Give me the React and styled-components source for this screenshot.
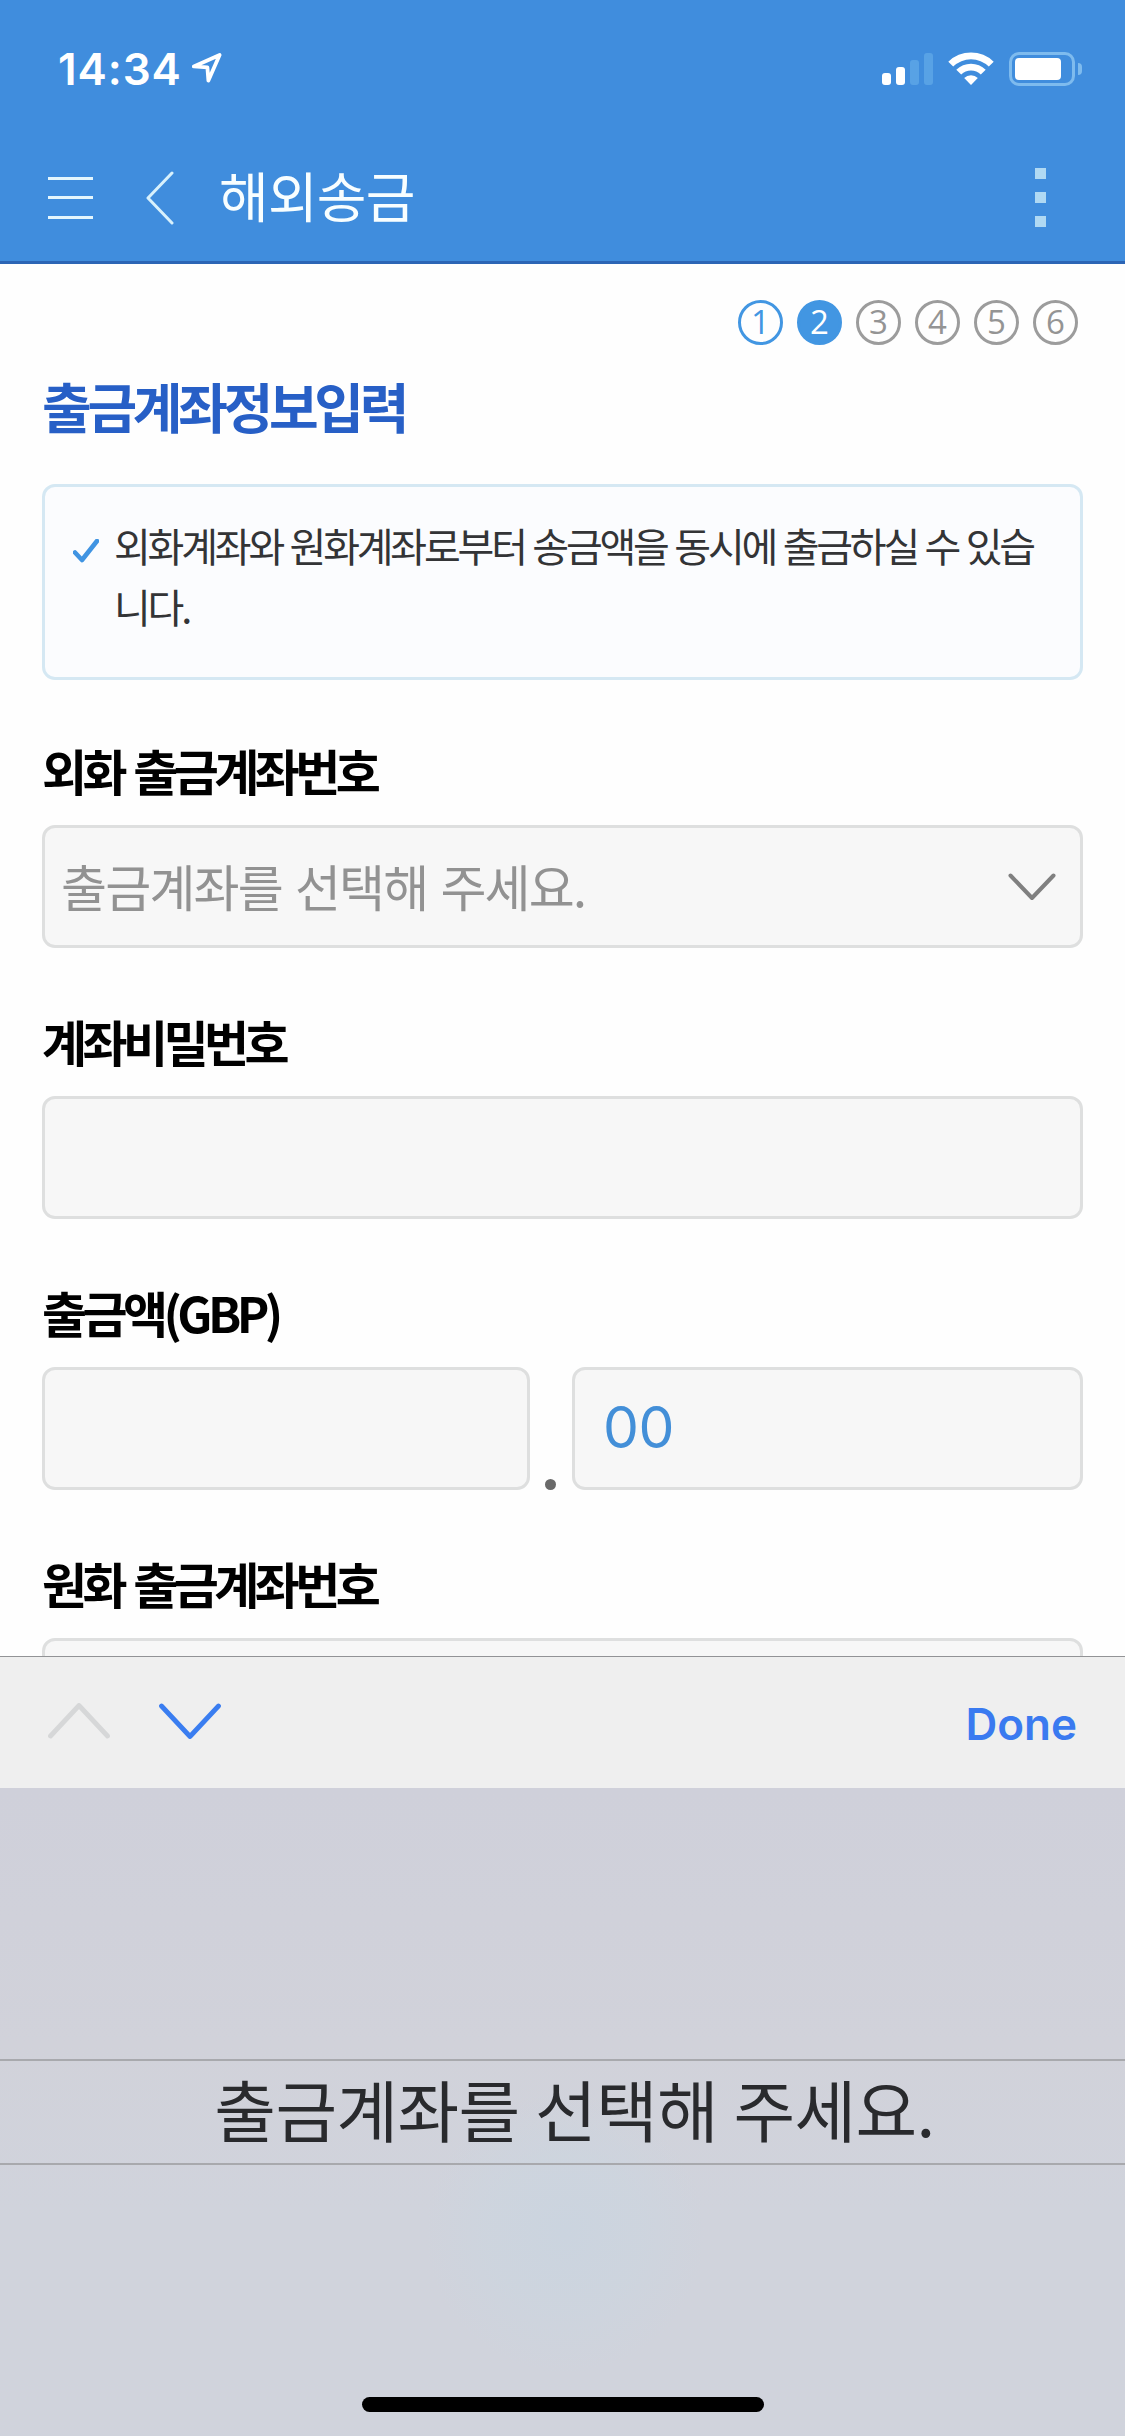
import { useState } from "react";
import styled, { createGlobalStyle } from "styled-components";

const steps = [1, 2, 3, 4, 5, 6];

const App = () => {
  const [current] = useState(2);

  return (
    <>
      <GlobalStyle />
      <Screen>
        <StatusBar>
          <Clock>14:34</Clock>
          <LocationIcon viewBox="0 0 30 30">
            <path d="M1.8 13.4 L27.6 2 L16.4 27.6 L15.4 14.4 Z" />
          </LocationIcon>
          <Signal>
            <Bar $h={12} />
            <Bar $h={18} />
            <Bar $h={25} $off />
            <Bar $h={32} $off />
          </Signal>
          <WifiIcon viewBox="0 0 46 33">
            <path d="M0.3 9.8 A32.2 32.2 0 0 1 45.7 9.8 L40.8 14.6 A25.4 25.4 0 0 0 5.2 14.6 Z" />
            <path d="M8.3 17.8 A21 21 0 0 1 37.7 17.8 L32.8 22.6 A14 14 0 0 0 13.2 22.6 Z" />
            <path d="M16.2 26 A9.7 9.7 0 0 1 29.8 26 L23 33 Z" />
          </WifiIcon>
          <Battery>
            <BatteryLevel />
          </Battery>
          <BatteryCap />
        </StatusBar>

        <Header>
          <MenuIcon>
            <i />
            <i />
            <i />
          </MenuIcon>
          <BackIcon viewBox="0 0 28 54">
            <path d="M26 2 L2 27 L26 52" />
          </BackIcon>
          <Title>해외송금</Title>
          <MoreIcon>
            <i />
            <i />
            <i />
          </MoreIcon>
        </Header>

        <Content>
          <Steps>
            {steps.map((n) => (
              <Step key={n} $done={n < current} $active={n === current}>
                {n}
              </Step>
            ))}
          </Steps>
          <Heading>출금계좌정보입력</Heading>
          <Notice>
            <CheckIcon viewBox="0 0 26 24">
              <path d="M2 13.5 L9 21 L24 2" />
            </CheckIcon>
            <p>
              외화계좌와 원화계좌로부터 송금액을 동시에 출금하실 수 있습
              <br />
              니다.
            </p>
          </Notice>

          <Field>
            <Label>외화 출금계좌번호</Label>
            <Select>
              <Placeholder>출금계좌를 선택해 주세요.</Placeholder>
              <SelectArrow viewBox="0 0 48 28">
                <path d="M2.5 2.5 L24 25 L45.5 2.5" />
              </SelectArrow>
            </Select>
          </Field>
          <Field>
            <Label>계좌비밀번호</Label>
            <Box />
          </Field>
          <Field>
            <Label>출금액(GBP)</Label>
            <AmountRow>
              <Box $w={488} />
              <Point />
              <Box $w={511}>
                <Cents>00</Cents>
              </Box>
            </AmountRow>
          </Field>
          <Field>
            <Label>원화 출금계좌번호</Label>
            <Box />
          </Field>
        </Content>

        <Toolbar>
          <NavArrow viewBox="0 0 62 36" $disabled>
            <path d="M2.5 33 L31 2.5 L59.5 33" />
          </NavArrow>
          <NavArrow viewBox="0 0 62 36">
            <path d="M2.5 3 L31 33.5 L59.5 3" />
          </NavArrow>
          <Done>Done</Done>
        </Toolbar>
        <Picker>
          <PickerRow>
            <span>출금계좌를 선택해 주세요.</span>
          </PickerRow>
          <HomeBar />
        </Picker>
      </Screen>
    </>
  );
};

export default App;

const GlobalStyle = createGlobalStyle`
  * {
    box-sizing: border-box;
  }
  body {
    margin: 0;
    background: #fff;
    font-family: "Noto Sans CJK KR", sans-serif;
  }
  p, h1, h2 {
    margin: 0;
  }
  svg {
    display: block;
    flex: none;
    fill: none;
    stroke-linecap: round;
    stroke-linejoin: round;
  }
`;

const Screen = styled.div`
  display: flex;
  flex-direction: column;
  width: 1125px;
  height: 2436px;
  overflow: hidden;
  background: #fefefe;
`;

const StatusBar = styled.div`
  display: flex;
  align-items: flex-start;
  flex: none;
  height: 132px;
  padding: 52px 43px 0 58px;
  background: #408ddd;
`;
const Clock = styled.div`
  width: 134px;
  height: 34px;
  font-family: Inter, sans-serif;
  font-size: 44px;
  font-weight: 600;
  line-height: 35px;
  letter-spacing: 0.9px;
  color: #fff;
`;
const LocationIcon = styled.svg`
  width: 30px;
  height: 30px;
  margin-top: 1px;
  stroke: #fff;
  stroke-width: 3.8;
`;
const Signal = styled.div`
  display: flex;
  align-items: flex-end;
  gap: 5px;
  height: 33px;
  margin-left: auto;
`;
const Bar = styled.i`
  width: 9px;
  height: ${(props) => props.$h}px;
  border-radius: 3px;
  background: ${(props) => (props.$off ? "#58a2e5" : "#fff")};
`;
const WifiIcon = styled.svg`
  width: 46px;
  height: 33px;
  margin-left: 15px;
  path {
    fill: #fff;
  }
`;
const Battery = styled.div`
  width: 66px;
  height: 34px;
  margin-left: 15px;
  padding: 3px;
  border: 3px solid #7ebbee;
  border-radius: 10px;
`;
const BatteryLevel = styled.div`
  width: 46px;
  height: 22px;
  border-radius: 4px;
  background: #fff;
`;
const BatteryCap = styled.div`
  width: 4px;
  height: 12px;
  margin: 11px 0 0 3px;
  border-radius: 0 4px 4px 0;
  background: #7ebbee;
`;

const Header = styled.header`
  display: flex;
  align-items: center;
  flex: none;
  height: 132px;
  padding: 2px 79px 0 48px;
  border-bottom: 3px solid #2c65b5;
  background: #408ddd;
`;
const MenuIcon = styled.div`
  display: flex;
  flex-direction: column;
  justify-content: space-between;
  width: 45px;
  height: 42px;
  i {
    height: 3px;
    background: #e4f6fd;
  }
`;
const BackIcon = styled.svg`
  width: 28px;
  height: 54px;
  margin-left: 53px;
  stroke: #d8f1fc;
  stroke-width: 3;
`;
const Title = styled.h1`
  margin-left: 45px;
  padding-bottom: 6px;
  font-size: 54px;
  font-weight: 400;
  line-height: 80px;
  letter-spacing: -0.8px;
  color: #f8feff;
`;
const MoreIcon = styled.div`
  display: flex;
  flex-direction: column;
  gap: 13px;
  margin-left: auto;
  i {
    width: 11px;
    height: 11px;
    background: #b0d9f3;
  }
`;

const Content = styled.main`
  flex: 1;
  min-height: 0;
  overflow: hidden;
  padding: 36px 42px 0;
`;
const Steps = styled.div`
  display: flex;
  justify-content: flex-end;
  gap: 14px;
  padding-right: 5px;
`;
const Step = styled.div`
  width: 45px;
  height: 45px;
  border: 3px solid
    ${(props) => (props.$done || props.$active ? "#4296e2" : "#9c9c9c")};
  border-radius: 50%;
  background: ${(props) => (props.$active ? "#4296e2" : "transparent")};
  font-family: "Open Sans", sans-serif;
  font-size: 33px;
  font-weight: 400;
  line-height: 37px;
  text-align: center;
  color: ${(props) =>
    props.$active ? "#fff" : props.$done ? "#4296e2" : "#949494"};
`;
const Heading = styled.h2`
  height: 80px;
  margin-top: 21px;
  font-size: 54px;
  font-weight: 600;
  line-height: 79px;
  letter-spacing: -4.3px;
  white-space: nowrap;
  color: #275fc6;
`;
const Notice = styled.div`
  display: flex;
  height: 196px;
  margin-top: 38px;
  padding: 28px 0 0 28px;
  border: 3px solid #d5e8f3;
  border-radius: 13px;
  background: #fbfcfe;
  p {
    margin-left: 15px;
    font-size: 40px;
    line-height: 61px;
    letter-spacing: -3.2px;
    word-spacing: 1.8px;
    white-space: nowrap;
    color: #333436;
  }
`;
const CheckIcon = styled.svg`
  width: 26px;
  height: 24px;
  margin-top: 24px;
  stroke: #4094e2;
  stroke-width: 4.6;
`;

const Field = styled.div`
  height: 271px;
  padding-top: 56px;
`;
const Label = styled.div`
  height: 89px;
  font-size: 49px;
  font-weight: 600;
  line-height: 68px;
  letter-spacing: -4.6px;
  word-spacing: 3.8px;
  white-space: nowrap;
  color: #000;
`;
const Box = styled.div`
  display: flex;
  align-items: center;
  width: ${(props) => (props.$w ? props.$w + "px" : "auto")};
  height: 123px;
  border: 3px solid #dedfdf;
  border-radius: 13px;
  background: #f7f7f7;
`;
const Select = styled(Box)`
  justify-content: space-between;
  padding: 0 24px 0 16px;
`;
const Placeholder = styled.span`
  padding-bottom: 4px;
  font-size: 50px;
  line-height: 72px;
  letter-spacing: -1.8px;
  word-spacing: 3.5px;
  white-space: nowrap;
  color: #929292;
`;
const SelectArrow = styled.svg`
  width: 48px;
  height: 28px;
  stroke: #808080;
  stroke-width: 4;
`;
const AmountRow = styled.div`
  display: flex;
  align-items: flex-end;
  justify-content: space-between;
`;
const Point = styled.i`
  width: 11px;
  height: 11px;
  margin-right: 2px;
  border-radius: 50%;
  background: #696969;
`;
const Cents = styled.span`
  margin-left: 28px;
  padding-bottom: 1px;
  font-family: Inter, sans-serif;
  font-size: 57px;
  font-weight: 400;
  line-height: 72px;
  letter-spacing: -0.5px;
  color: #438fd8;
`;

const Toolbar = styled.div`
  display: flex;
  align-items: center;
  flex: none;
  height: 132px;
  padding: 0 48px;
  gap: 49px;
  border-top: 1px solid #929396;
  background: #efefef;
`;
const NavArrow = styled.svg`
  width: 62px;
  height: 36px;
  margin-bottom: 4px;
  stroke: ${(props) => (props.$disabled ? "#d6d7d8" : "#3a7df0")};
  stroke-width: 4.8;
`;
const Done = styled.div`
  margin-left: auto;
  padding-top: 2px;
  font-family: Inter, sans-serif;
  font-size: 44px;
  font-weight: 600;
  color: #3a7af0;
`;
const Picker = styled.div`
  display: flex;
  flex-direction: column;
  align-items: center;
  flex: none;
  height: 648px;
  padding-top: 271px;
  background:
    radial-gradient(circle 140px at 565px 445px, #cbd4df, #ccd5dfaa 55%, transparent),
    linear-gradient(#cfd0da, #d1d2da 40%, #d0d3dc 65%);
`;
const PickerRow = styled.div`
  display: flex;
  justify-content: center;
  align-items: center;
  width: 100%;
  height: 106px;
  padding: 0 0 9px 24px;
  border-top: 2px solid #a8a9ad;
  border-bottom: 2px solid #a8a9ad;
  font-size: 67px;
  line-height: 93px;
  letter-spacing: -0.6px;
  word-spacing: 1px;
  white-space: nowrap;
  color: #292a2d;
`;
const HomeBar = styled.div`
  width: 402px;
  height: 15px;
  margin-top: 232px;
  border-radius: 8px;
  background: #000;
`;
